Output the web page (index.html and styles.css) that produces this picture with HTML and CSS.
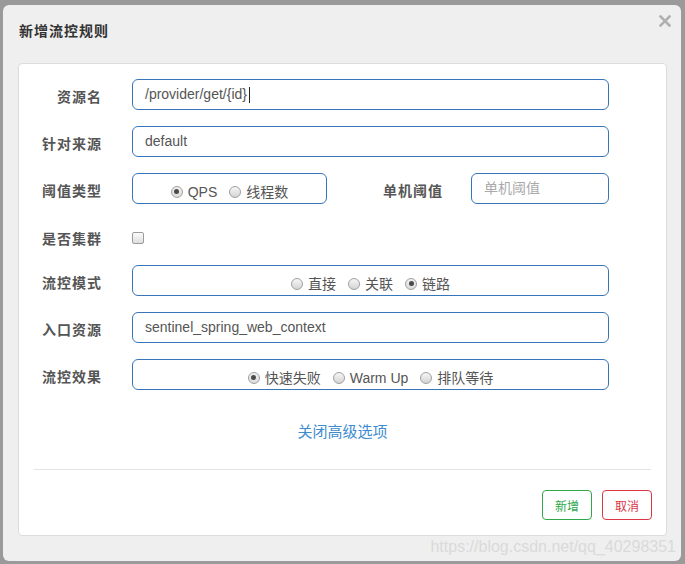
FILE: index.html
```html
<!DOCTYPE html>
<html lang="zh-CN">
<head>
<meta charset="utf-8">
<title>新增流控规则</title>
<link rel="stylesheet" href="styles.css">
</head>
<body>
<div class="modal">
  <div class="modal-header">
    <h4 class="modal-title">新增流控规则</h4>
    <span class="close" aria-label="关闭">
      <svg width="12" height="12" viewBox="0 0 12 12"><path d="M1.5 1.5 L10.5 10.5 M10.5 1.5 L1.5 10.5" stroke="#b0b0b0" stroke-width="2.6" stroke-linecap="square" fill="none"/></svg>
    </span>
  </div>
  <div class="card">
    <div class="form">
      <div class="row">
        <label class="label">资源名</label>
        <div class="input">/provider/get/{id}<span class="caret"></span></div>
      </div>
      <div class="row">
        <label class="label">针对来源</label>
        <div class="input">default</div>
      </div>
      <div class="row">
        <label class="label">阈值类型</label>
        <div class="split">
          <div class="box radios">
            <span class="opt"><span class="radio checked"></span>QPS</span>
            <span class="opt"><span class="radio"></span>线程数</span>
          </div>
          <label class="label label-inner">单机阈值</label>
          <div class="input placeholder">单机阈值</div>
        </div>
      </div>
      <div class="row row-check">
        <label class="label label-check">是否集群</label>
        <span class="checkbox"></span>
      </div>
      <div class="row">
        <label class="label">流控模式</label>
        <div class="box radios">
          <span class="opt"><span class="radio"></span>直接</span>
          <span class="opt"><span class="radio"></span>关联</span>
          <span class="opt"><span class="radio checked"></span>链路</span>
        </div>
      </div>
      <div class="row">
        <label class="label">入口资源</label>
        <div class="input">sentinel_spring_web_context</div>
      </div>
      <div class="row">
        <label class="label">流控效果</label>
        <div class="box radios">
          <span class="opt"><span class="radio checked"></span>快速失败</span>
          <span class="opt"><span class="radio"></span>Warm Up</span>
          <span class="opt"><span class="radio"></span>排队等待</span>
        </div>
      </div>
    </div>
    <div class="advanced"><a class="link">关闭高级选项</a></div>
    <div class="divider"></div>
    <div class="footer">
      <button class="btn btn-add">新增</button>
      <button class="btn btn-cancel">取消</button>
    </div>
  </div>
  <div class="watermark">https://blog.csdn.net/qq_40298351</div>
</div>
</body>
</html>
```
FILE: styles.css
```css
* { box-sizing: border-box; }

html, body {
  margin: 0;
  padding: 0;
}

body {
  background: #9a9a9a;
  font-family: "Liberation Sans", "Noto Sans CJK SC", sans-serif;
  font-size: 14px;
  color: #555;
  width: 685px;
  height: 564px;
  overflow: hidden;
  padding: 5px 4px 3px 3px;
}

.modal {
  position: relative;
  width: 678px;
  height: 556px;
  background: #efefef;
  border-radius: 6px;
  padding: 16px 14px 0 15px;
}

.modal-header {
  display: flex;
  justify-content: space-between;
  align-items: flex-start;
  margin-bottom: 22px;
  padding-left: 1px;
}

.modal-title {
  margin: 0;
  font-size: 14px;
  line-height: 20px;
  font-weight: bold;
  letter-spacing: 1px;
  color: #333;
}

.close {
  display: block;
  width: 12px;
  height: 12px;
  margin-top: -6px;
  margin-right: -4px;
}

.close svg { display: block; }

.card {
  width: 649px;
  background: #fff;
  border: 1px solid #dcdcdc;
  border-radius: 4px;
  padding: 15px;
}

.form {
  display: flex;
  flex-direction: column;
  gap: 16px;
}

.row {
  display: grid;
  grid-template-columns: 67px 477px;
  column-gap: 31px;
  height: 31px;
}

.label {
  display: block;
  text-align: right;
  font-weight: bold;
  letter-spacing: 1px;
  margin-right: -1px;
  line-height: 20px;
  padding-top: 8px;
  color: #555;
  white-space: nowrap;
}

.input {
  height: 31px;
  border: 1px solid #3676b8;
  border-radius: 6px;
  padding: 0 12px;
  line-height: 29px;
  color: #555;
  display: flex;
  align-items: center;
  white-space: nowrap;
}

.caret {
  display: inline-block;
  width: 1px;
  height: 16px;
  background: #222;
  margin-left: 2px;
}

.placeholder { color: #aaa; }

.split {
  display: grid;
  grid-template-columns: 195px 1fr 138px;
}

.label-inner {
  padding-right: 29px;
}

.box {
  height: 31px;
  border: 1px solid #3676b8;
  border-radius: 6px;
}

.radios {
  display: flex;
  justify-content: center;
  align-items: center;
  padding-top: 6px;
  line-height: 20px;
  color: #555;
}

.opt {
  display: flex;
  align-items: center;
  margin-right: 12px;
  white-space: nowrap;
}

.opt:last-child { margin-right: 0; }

.radio {
  position: relative;
  width: 12px;
  height: 12px;
  border-radius: 50%;
  border: 1px solid #a0a0a0;
  background: linear-gradient(#f6f6f6, #d4d4d4);
  margin-right: 5px;
  flex: none;
}

.radio.checked {
  background: linear-gradient(#f0f0f0, #dcdcdc);
}

.radio.checked::after {
  content: "";
  position: absolute;
  left: 2.5px;
  top: 2.5px;
  width: 5px;
  height: 5px;
  border-radius: 50%;
  background: #4a4a4a;
}

.row-check {
  height: 29px;
}

.label-check {
  padding-top: 9px;
}

.checkbox {
  display: block;
  width: 12px;
  height: 12px;
  margin-top: 12px;
  border: 1px solid #9c9c9c;
  border-radius: 2px;
  background: linear-gradient(#fbfbfb, #dedede);
}

.advanced {
  margin-top: 32px;
  text-align: center;
  line-height: 20px;
  height: 20px;
}

.link {
  color: #3d8bd0;
  font-size: 15px;
  text-decoration: none;
  cursor: pointer;
}

.divider {
  margin-top: 27px;
  height: 1px;
  background: #e3e3e3;
}

.footer {
  display: flex;
  justify-content: flex-end;
  gap: 10px;
  margin-top: 20px;
  margin-right: -1px;
}

.btn {
  width: 50px;
  height: 30px;
  background: #fff;
  border: 1px solid;
  border-radius: 4px;
  font-family: "Liberation Sans", "Noto Sans CJK SC", sans-serif;
  font-size: 12px;
  padding: 0;
  cursor: pointer;
}

.btn-add {
  border-color: #2ea84a;
  color: #2ea84a;
}

.btn-cancel {
  border-color: #dc3545;
  color: #dc3545;
}

.watermark {
  position: absolute;
  right: 5px;
  bottom: 4px;
  font-size: 16px;
  line-height: 20px;
  color: #dadada;
  white-space: nowrap;
}
```
